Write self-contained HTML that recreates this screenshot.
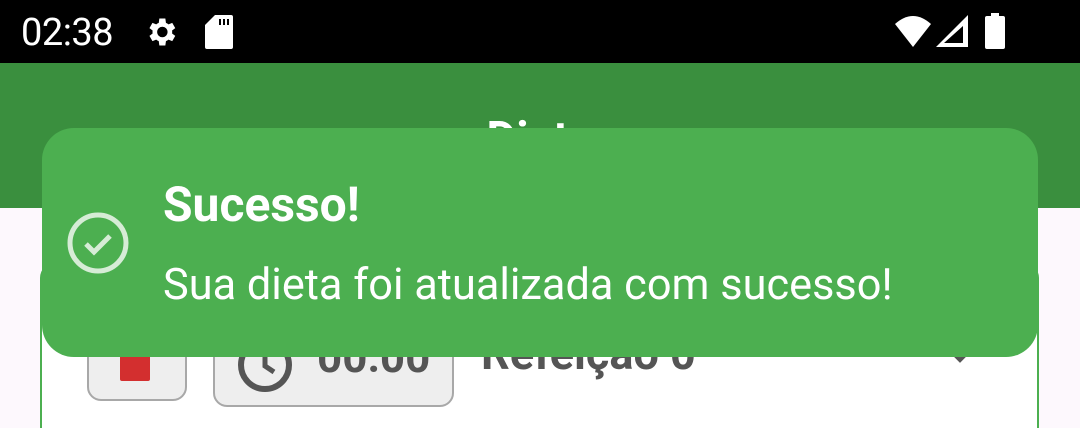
<!DOCTYPE html>
<html><head><meta charset="utf-8"><style>
*{margin:0;padding:0;box-sizing:border-box}
html,body{width:1080px;height:428px;overflow:hidden}
body{background:#fdf8fd;font-family:"Roboto","Liberation Sans",sans-serif;position:relative}
.sb{position:absolute;left:0;top:0;width:1080px;height:63px;background:#000;color:#fff}
.hd{position:absolute;left:0;top:63px;width:1080px;height:145px;background:#3a8f3e}
.title{position:absolute;left:0;width:1080px;top:112px;text-align:center;color:#fff;font-weight:bold;font-size:46px}
.card{position:absolute;left:40px;top:262px;width:999px;height:166px;border:2px solid #4caf50;border-bottom:none;border-radius:16px 16px 0 0;background:#fff}
.b1{position:absolute;left:87px;top:325px;width:100px;height:76px;background:#eee;border:2px solid #a8a8a8;border-radius:14px}
.b2{position:absolute;left:213px;top:325px;width:241px;height:82px;background:#eee;border:2px solid #a8a8a8;border-radius:14px}
.toast{position:absolute;left:42px;top:128px;width:996px;height:229px;background:#4caf50;border-radius:32px;color:#fff}
</style></head><body>
<div class="sb">
<div style="position:absolute;left:21px;top:11px;font-size:38px;letter-spacing:-0.5px">02:38</div>
<svg style="position:absolute;left:143px;top:14px" width="36" height="36" viewBox="0 0 24 24"><path fill="#fff" d="M19.4 13a7.5 7.5 0 000-2l2.1-1.6-2-3.5-2.5 1a7 7 0 00-1.7-1L14.9 3h-4l-.4 2.9a7 7 0 00-1.7 1l-2.5-1-2 3.5L6.4 11a7.5 7.5 0 000 2l-2.1 1.6 2 3.5 2.5-1a7 7 0 001.7 1l.4 2.9h4l.4-2.9a7 7 0 001.7-1l2.5 1 2-3.5zM12.9 15.5a3.5 3.5 0 110-7 3.5 3.5 0 010 7z"/></svg>
<svg style="position:absolute;left:205px;top:15px" width="28" height="34" viewBox="0 0 14 17"><path fill="#fff" d="M5 0h8a1 1 0 011 1v15a1 1 0 01-1 1H1a1 1 0 01-1-1V5zM7 2v3h1V2zm2 0v3h1V2zm2 0v3h1V2z"/></svg>
<svg style="position:absolute;left:893px;top:14px" width="40" height="34" viewBox="0 0 40 34"><path fill="#fff" d="M2 10Q20-6 38 10L20 33z"/></svg>
<svg style="position:absolute;left:935px;top:14px" width="34" height="34" viewBox="0 0 34 34"><path fill="#fff" d="M33 1V33H1zM28 12L9 29h19z" fill-rule="evenodd"/></svg>
<svg style="position:absolute;left:983px;top:13px" width="24" height="36" viewBox="0 0 24 36"><path fill="#fff" d="M8 0h8v3h4a2 2 0 012 2v29a2 2 0 01-2 2H4a2 2 0 01-2-2V5a2 2 0 012-2h4z"/></svg>
</div>
<div class="hd"></div>
<div class="title">Dieta</div>
<div class="card"></div>
<div class="b1"><div style="position:absolute;left:31px;top:14px;width:30px;height:40px;background:#d32f2f;border-radius:2px"></div></div>
<div class="b2">
<svg style="position:absolute;left:20px;top:8px" width="60" height="60" viewBox="0 0 60 60"><circle cx="30" cy="30" r="24" fill="none" stroke="#555" stroke-width="6"/><path d="M30 16v15l9 6" stroke="#555" stroke-width="5" fill="none"/></svg>
<div style="position:absolute;left:102px;top:4px;font-size:44px;font-weight:bold;color:#555">00:00</div>
</div>
<div style="position:absolute;left:481px;top:327px;font-size:45px;font-weight:bold;color:#555">Refeição 0</div>
<svg style="position:absolute;left:945px;top:345px" width="30" height="20" viewBox="0 0 30 20"><path d="M3 3l12 12 12-12" stroke="#555" stroke-width="4" fill="none"/></svg>
<div class="toast">
<svg style="position:absolute;left:23px;top:82px" width="66" height="66" viewBox="0 0 66 66"><circle cx="33" cy="33" r="28" fill="none" stroke="#d6ecd6" stroke-width="5"/><path d="M21 34l8 8 16-16" stroke="#d6ecd6" stroke-width="5" fill="none"/></svg>
<div style="position:absolute;left:121px;top:48px;font-size:48px;font-weight:bold">Sucesso!</div>
<div style="position:absolute;left:121px;top:131px;font-size:43.3px">Sua dieta foi atualizada com sucesso!</div>
</div>
</body></html>
